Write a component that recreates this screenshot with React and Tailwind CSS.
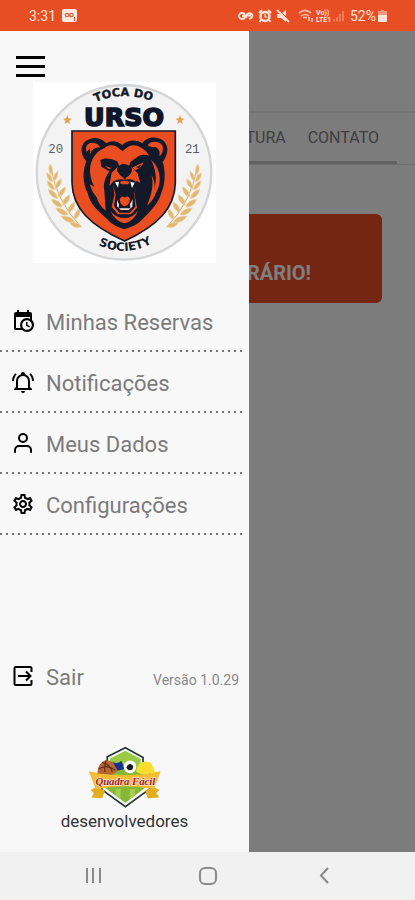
import { FiUser } from "react-icons/fi";
import { MdOutlineSettings } from "react-icons/md";

function CalendarIcon() {
	return (
		<svg viewBox="0 0 24 24" className="size-6" fill="currentColor" aria-hidden="true">
			<path d="M15,13H16.5V15.82L18.94,17.23L18.19,18.53L15,16.69V13M19,8H5V19H9.67C9.24,18.09 9,17.07 9,16A7,7 0 0,1 16,9C17.07,9 18.09,9.24 19,9.67V8M5,21C3.89,21 3,20.1 3,19V5C3,3.89 3.89,3 5,3H6V1H8V3H16V1H18V3H19A2,2 0 0,1 21,5V11.1C22.24,12.36 23,14.09 23,16A7,7 0 0,1 16,23C14.09,23 12.36,22.24 11.1,21H5M16,11.15A4.85,4.85 0 0,0 11.15,16C11.15,18.68 13.32,20.85 16,20.85A4.85,4.85 0 0,0 20.85,16C20.85,13.32 18.68,11.15 16,11.15Z" />
		</svg>
	);
}

function BellIcon() {
	return (
		<svg viewBox="0 0 24 24" className="size-6" fill="currentColor" aria-hidden="true">
			<path d="M10,21H14A2,2 0 0,1 12,23A2,2 0 0,1 10,21M21,19V20H3V19L5,17V11C5,7.9 7.03,5.17 10,4.29C10,4.19 10,4.1 10,4A2,2 0 0,1 12,2A2,2 0 0,1 14,4C14,4.1 14,4.19 14,4.29C16.97,5.17 19,7.9 19,11V17L21,19M17,11A5,5 0 0,0 12,6A5,5 0 0,0 7,11V18H17V11M19.75,3.19L18.33,4.61C20.04,6.3 21,8.6 21,11H23C23,8.07 21.84,5.25 19.75,3.19M1,11H3C3,8.6 3.96,6.3 5.67,4.61L4.25,3.19C2.16,5.25 1,8.07 1,11Z" />
		</svg>
	);
}

function ExitIcon() {
	return (
		<svg viewBox="0 0 24 24" className="size-6" fill="none" stroke="currentColor" strokeWidth="2" aria-hidden="true">
			<path d="M20.500 8V4.500a1.500 1.500 0 0 0-1.500-1.500H5a1.500 1.500 0 0 0-1.500 1.500v15A1.500 1.500 0 0 0 5 21h14a1.500 1.500 0 0 0 1.500-1.500V16" />
			<path d="M7 12h12M15 7.500l4.500 4.500-4.500 4.500" />
		</svg>
	);
}

const menuItems = [
	{ label: "Minhas Reservas", icon: <CalendarIcon /> },
	{ label: "Notificações", icon: <BellIcon /> },
	{ label: "Meus Dados", icon: <FiUser className="size-6" /> },
	{ label: "Configurações", icon: <MdOutlineSettings className="size-6" /> },
];

// One leafy branch, mirrored for the other side of the badge
function Laurel({ transform }) {
	return (
		<g transform={transform}>
			<path d="M66 268 Q82 370 154 444" fill="none" stroke="#d9a85c" strokeWidth="3" />
			<g fill="#e2b76f" stroke="#ecd0a0" strokeWidth="2">
				<path d="M66 290 Q54 274 64 258 Q76 276 66 290Z" />
				<path d="M70 312 Q52 304 53 284 Q72 294 70 312Z" />
				<path d="M72 310 Q72 290 86 280 Q90 300 72 310Z" />
				<path d="M76 336 Q56 330 54 308 Q76 316 76 336Z" />
				<path d="M78 334 Q78 312 97 302 Q98 324 78 334Z" />
				<path d="M86 362 Q62 358 58 334 Q82 340 86 362Z" />
				<path d="M88 358 Q88 336 109 326 Q110 350 88 358Z" />
				<path d="M100 388 Q76 388 67 364 Q94 366 100 388Z" />
				<path d="M101 382 Q100 360 122 350 Q124 374 101 382Z" />
				<path d="M117 411 Q92 414 80 390 Q108 390 117 411Z" />
				<path d="M117 404 Q115 382 137 372 Q140 396 117 404Z" />
				<path d="M137 432 Q110 438 97 414 Q126 412 137 432Z" />
				<path d="M136 424 Q132 404 152 392 Q158 414 136 424Z" />
				<path d="M158 446 Q134 454 122 434 Q146 430 158 446Z" />
			</g>
		</g>
	);
}

function BearBadge() {
	return (
		<svg viewBox="12 12 549 543" className="h-[181px] w-[183px]" role="img" aria-label="Toca do Urso Society">
			<defs>
				<path id="badge-top" d="M184 80 Q280 30 384 76" />
				<path id="badge-bottom" d="M176 482 Q288 558 400 476" />
			</defs>
			<rect x="12" y="12" width="549" height="543" fill="#fff" />
			<circle cx="285" cy="283" r="262" fill="#f3f3f3" stroke="#d3d5d7" strokeWidth="7" />
			<text fontFamily="DejaVu Sans" fontWeight="700" fontSize="34" fill="#14192a" stroke="#14192a">
				<textPath href="#badge-top" startOffset="50%" textAnchor="middle">TOCA DO</textPath>
			</text>
			<text x="285" y="144" textAnchor="middle" fontFamily="DejaVu Sans" fontWeight="700" fontSize="76" fill="#10162a" stroke="#10162a" strokeWidth="5">
				URSO
			</text>
			<path d="M115 112l4 9 9 1-7 6 2 10-8-5-8 5 2-10-7-6 9-1z" fill="#e3a34e" />
			<path d="M453 112l4 9 9 1-7 6 2 10-8-5-8 5 2-10-7-6 9-1z" fill="#e3a34e" />
			<g fontFamily="Liberation Mono" fontSize="37" fill="#5a5e68" textAnchor="middle">
				<text x="80" y="226">20</text>
				<text x="490" y="226">21</text>
			</g>
			<Laurel />
			<Laurel transform="translate(570 0) scale(-1 1)" />

			{/* shield */}
			<path d="M129 159H439V315C437 390 388 442 287 489C182 442 131 390 129 315Z" fill="#ea4d20" stroke="#14192a" strokeWidth="5" />

			{/* head outline with ears */}
			<path
				d="M172 250 C150 226 153 193 181 184 C204 174 223 186 232 196 C246 186 265 188 280 201 C298 184 324 184 340 196 C352 177 382 173 403 188 C424 207 414 234 401 252 C411 284 408 321 397 344 C389 376 362 402 340 424 C326 441 302 448 286 454 C267 448 247 439 235 424 C208 400 182 377 176 345 C161 318 160 280 172 250Z"
				fill="#14192a"
			/>
			{/* lit left side of the face and forehead */}
			<path
				d="M191 243 C201 225 210 218 225 211 C240 198 258 199 272 213 L281 220 C297 200 320 197 334 208 C346 214 354 222 360 233 C349 229 336 229 326 236 L304 252 L300 264 C292 257 280 256 270 263 L266 251 C246 241 228 238 214 247 L217 266 L241 280 C228 299 222 318 226 338 L230 398 C215 386 207 373 203 358 C194 347 185 334 183 319 L196 326 C182 300 178 268 191 243Z"
				fill="#ea4d20"
			/>
			<path d="M173 222 C166 204 179 192 194 195 C205 196 211 202 213 209 C200 207 187 214 184 230 L183 211Z" fill="#ea4d20" />
			<path d="M358 199 C367 188 390 188 400 202 C405 216 400 229 391 235 C390 217 375 205 358 205Z" fill="#ea4d20" />
			<path d="M380 207 C393 216 393 224 391 235 C380 226 371 217 363 212Z" fill="#14192a" />
			{/* right cheek */}
			<path d="M366 246 C393 267 401 313 382 342 C377 359 366 373 354 383 C369 348 374 320 368 292 C377 309 379 322 375 337 C386 302 379 269 366 246Z" fill="#ea4d20" />
			{/* brows and eyes */}
			<path d="M218 251 L259 269 L250 276 Q231 274 218 251Z" fill="#14192a" />
			<path d="M228 264 L247 270 L240 274Z" fill="#ea4d20" />
			<path d="M311 268 L344 253 Q337 271 318 277Z" fill="#ea4d20" />
			<path d="M321 268 L337 260 L330 271Z" fill="#14192a" />
			{/* muzzle */}
			<path d="M248 284 L266 266 L265 280 Q275 297 287 300 Q301 297 309 280 L307 266 L326 286 L334 315 L322 308 L317 352 L324 389 L306 409 H267 L248 387 L256 351 L252 312 L241 324Z" fill="#ea4d20" />
			<path d="M265 270 Q287 251 307 270 Q310 282 297 286 L287 299 L277 286 Q263 282 265 270Z" fill="#14192a" />
			<path d="M284 290 H290 V305 H284Z" fill="#14192a" />
			{/* open mouth */}
			<path d="M250 312 Q267 300 286 306 Q308 299 324 314 L316 349 L319 386 L302 404 H271 L255 384 L260 350Z" fill="#14192a" />
			<path d="M258 313 L270 311 L267 329Z M304 311 L317 314 L309 330Z" fill="#fff" />
			<path d="M264 366 L270 379 L269 391 H304 L303 378 L311 364 L310 386 L299 396 H275 L264 385Z" fill="#fbd9cd" />
			<path d="M273 311 Q287 305 301 311 L298 319 H276Z" fill="#ea4d20" />
			<path d="M272 362 Q281 350 288 359 Q297 351 303 363 Q301 383 287 385 Q273 381 272 362Z" fill="#ea4d20" />
			<path d="M244 398 Q261 420 286 420 Q311 420 327 398 Q316 429 286 436 Q257 428 244 398Z" fill="#ea4d20" />

			<text fontFamily="DejaVu Sans" fontWeight="700" fontSize="35" fill="#14192a">
				<textPath href="#badge-bottom" startOffset="50%" textAnchor="middle">SOCIETY</textPath>
			</text>
		</svg>
	);
}

function DeveloperLogo() {
	return (
		<svg viewBox="38 22 220 188" className="h-[63px] w-[74px]" role="img" aria-label="Quadra Fácil">
			<path d="M149 27L202 56V83L222 97V150L149 203L79 152V98L95 83V54Z" fill="#f7f7f7" stroke="#24372f" strokeWidth="5" />
			<path d="M149 37L194 61V90L210 101V145L149 191L89 147V101L104 90V60Z" fill="#86b738" />
			<path d="M120 150H135V181L120 170ZM162 150H178V171L162 182Z" fill="#a6cf50" />
			<path d="M149 37L194 61V80H104V60Z" fill="#9aca44" />
			<path d="M63 145L45 153L55 162L48 176L80 178L88 155ZM233 145L251 153L241 162L250 176L216 178L208 155Z" fill="#e2ae20" />
			<path d="M40 97Q149 120 254 97L235 151Q149 133 61 151Z" fill="#f2bd33" />
			<path d="M66 104Q67 70 92 64Q119 66 125 98L110 108Z" fill="#b86630" />
			<path d="M70 90Q93 76 119 94M92 64Q86 80 88 100M80 71Q102 75 110 99" fill="none" stroke="#4f2817" strokeWidth="3" />
			<path d="M111 69Q125 78 137 66L147 91L126 96Z" fill="#17328d" />
			<circle cx="163" cy="84" r="19" fill="#fff" />
			<path d="M156 79l8-4 9 7-3 11-12 1-6-7z" fill="#1a1a1a" />
			<path d="M181 99Q181 78 201 70Q225 63 232 85L238 102L200 107Z" fill="#f5de2e" />
			<text x="149" y="138" textAnchor="middle" fontFamily="Liberation Serif" fontStyle="italic" fontWeight="700" fontSize="32" fill="#a3202e" stroke="#f6e3c8" strokeWidth="4" paintOrder="stroke">
				Quadra Fácil
			</text>
		</svg>
	);
}

function StatusBar() {
	return (
		<header className="flex h-[31px] shrink-0 items-center justify-between bg-[#e84e23] pr-7 pl-[29px] text-sm text-[#ffe3d8]">
			<div className="flex items-center gap-[6px]">
				<span>3:31</span>
				<svg viewBox="0 0 15 13" className="h-[13px] w-[15px]" aria-hidden="true">
					<rect width="15" height="13" rx="2" fill="#ffe9e0" />
					<circle cx="5" cy="6" r="1.700" fill="none" stroke="#c9683f" strokeWidth="1.300" />
					<circle cx="9.500" cy="6" r="1.700" fill="none" stroke="#c9683f" strokeWidth="1.300" />
					<path d="M12.500 8v4" stroke="#e84e23" />
				</svg>
			</div>
			<div className="flex items-center gap-1">
				<svg viewBox="0 0 16 10" className="h-[10px] w-4" fill="none" stroke="currentColor" strokeWidth="1.800" aria-hidden="true">
					<circle cx="4" cy="5" r="3" />
					<path d="M4 5h4M8.500 7a3 3 0 1 1 6-3c0 2-1.500 3.500-3.500 4M9 4.500h4" />
				</svg>
				<svg viewBox="0 0 14 14" className="size-[14px]" fill="none" stroke="currentColor" aria-hidden="true">
					<circle cx="7" cy="7.500" r="4.500" strokeWidth="2.500" />
					<path d="M7 5v3h2.500" strokeWidth="1.200" />
					<path d="M1 4l3-3M13 4l-3-3M3 11l-1.500 2M11 11l1.500 2" strokeWidth="2" />
				</svg>
				<svg viewBox="0 0 14 14" className="size-[14px]" fill="currentColor" aria-hidden="true">
					<path d="M1 5h4l5-4v12L5 9H1z" />
					<path d="M2 0l12 12" stroke="#e84e23" />
					<path d="M1 1l12 12" stroke="currentColor" strokeWidth="1.800" />
				</svg>
				<svg viewBox="0 0 48 14" className="ml-1 h-[14px] w-12" fill="none" stroke="currentColor" aria-hidden="true">
					<path d="M1 4q6-5 12 0M3 7q4-3 8 0M5 9q2-1.500 4 0" strokeWidth="1.700" opacity="0.700" />
					<path d="M11 8v4M14 9v4" strokeWidth="1.300" />
					<path d="M36 12.500V10M39 12.500V8M42 12.500V5M45 12.500V2" strokeWidth="1.500" opacity="0.400" />
					<g fill="currentColor" stroke="none" fontFamily="Roboto" fontWeight="700" fontSize="7">
						<text x="18" y="6">Vo))</text>
						<text x="18" y="13">LTE1</text>
					</g>
				</svg>
				<div className="flex items-center gap-[2px]">
					<span>52%</span>
					<svg viewBox="0 0 9 12" className="h-3 w-[9px]" fill="currentColor" aria-hidden="true">
						<path d="M3 0h3v1h3v4H0V1h3z" opacity="0.500" />
						<path d="M0 5h9v6a1 1 0 0 1-1 1H1a1 1 0 0 1-1-1z" />
					</svg>
				</div>
			</div>
		</header>
	);
}

// The screen that stays behind the open drawer
function Backdrop() {
	return (
		<div className="flex flex-1 flex-col bg-[#f8f8f8]">
			<div className="h-[82px] border-b-2 border-[#e4e4e4]" />
			<div className="flex h-[52px] border-b border-[#dcdcdc]">
				<nav className="mr-[18px] flex flex-1 items-center justify-end gap-[22px] border-b-[3px] border-[#c4c4c4] pt-[2px] pr-[18px] text-base text-[#808080]">
					<a href="#estrutura">ESTRUTURA</a>
					<a href="#contato">CONTATO</a>
				</nav>
			</div>
			<button
				type="button"
				className="mx-[33px] mt-[49px] h-[89px] rounded-md bg-[#ea4c26] pt-7 pr-[71px] text-right text-xl font-bold text-white"
			>
				HORÁRIO!
			</button>
		</div>
	);
}

function Drawer() {
	return (
		<aside className="absolute inset-y-0 left-0 flex w-3/5 flex-col bg-[#f8f8f8]">
			<button type="button" aria-label="Menu" className="mt-6 ml-4 flex w-[29px] flex-col gap-[6px] py-[1px]">
				<span className="h-[3px] w-full bg-black" />
				<span className="h-[3px] w-full bg-black" />
				<span className="h-[3px] w-full bg-black" />
			</button>

			<div className="mt-1 flex justify-center">
				<BearBadge />
			</div>

			<nav className="mt-7">
				<ul>
					{menuItems.map((item) => (
						<li key={item.label}>
							<a href="#menu" className="flex h-[59px] items-center gap-[11px] pl-[11px] text-[22px] text-[#7b7b7b]">
								<span className="text-black">{item.icon}</span>
								<span className="pt-1">{item.label}</span>
							</a>
							<div className="mr-[3px] h-[2px] bg-[repeating-linear-gradient(90deg,#777_0_2px,transparent_2px_6px)]" />
						</li>
					))}
				</ul>
			</nav>

			<div className="mt-auto flex items-center justify-between pr-[10px] pl-[11px]">
				<button type="button" className="flex items-center gap-[11px] text-[22px] text-[#7b7b7b]">
					<span className="text-black">
						<ExitIcon />
					</span>
					<span className="pt-1">Sair</span>
				</button>
				<span className="pt-2 text-sm text-[#888]">Versão 1.0.29</span>
			</div>

			<div className="mt-[52px] mb-[19px] flex flex-col items-center">
				<DeveloperLogo />
				<p className="text-[17px] leading-6 text-[#333]">desenvolvedores</p>
			</div>
		</aside>
	);
}

function SystemNav() {
	return (
		<footer className="flex h-12 shrink-0 items-center justify-around bg-[#f1f1f1] px-[35px] text-[#8a8a8a]">
			<button type="button" aria-label="Recentes">
				<svg viewBox="0 0 18 18" className="size-[18px]" stroke="currentColor" strokeWidth="2">
					<path d="M3 1v15M9 1v15M16 1v15" />
				</svg>
			</button>
			<button type="button" aria-label="Início">
				<svg viewBox="0 0 18 18" className="size-[18px]" fill="none" stroke="currentColor" strokeWidth="2">
					<rect x="1" y="1" width="16" height="16" rx="5" />
				</svg>
			</button>
			<button type="button" aria-label="Voltar">
				<svg viewBox="0 0 18 18" className="size-[18px]" fill="none" stroke="currentColor" strokeWidth="2">
					<path d="M14 1L7 8.500l7 7.500" />
				</svg>
			</button>
		</footer>
	);
}

export default function App() {
	return (
		<div className="flex min-h-screen flex-col font-[Roboto,sans-serif]">
			<StatusBar />
			<main className="relative flex flex-1 flex-col">
				<Backdrop />
				<div className="absolute inset-0 bg-black/50" />
				<Drawer />
			</main>
			<SystemNav />
		</div>
	);
}
